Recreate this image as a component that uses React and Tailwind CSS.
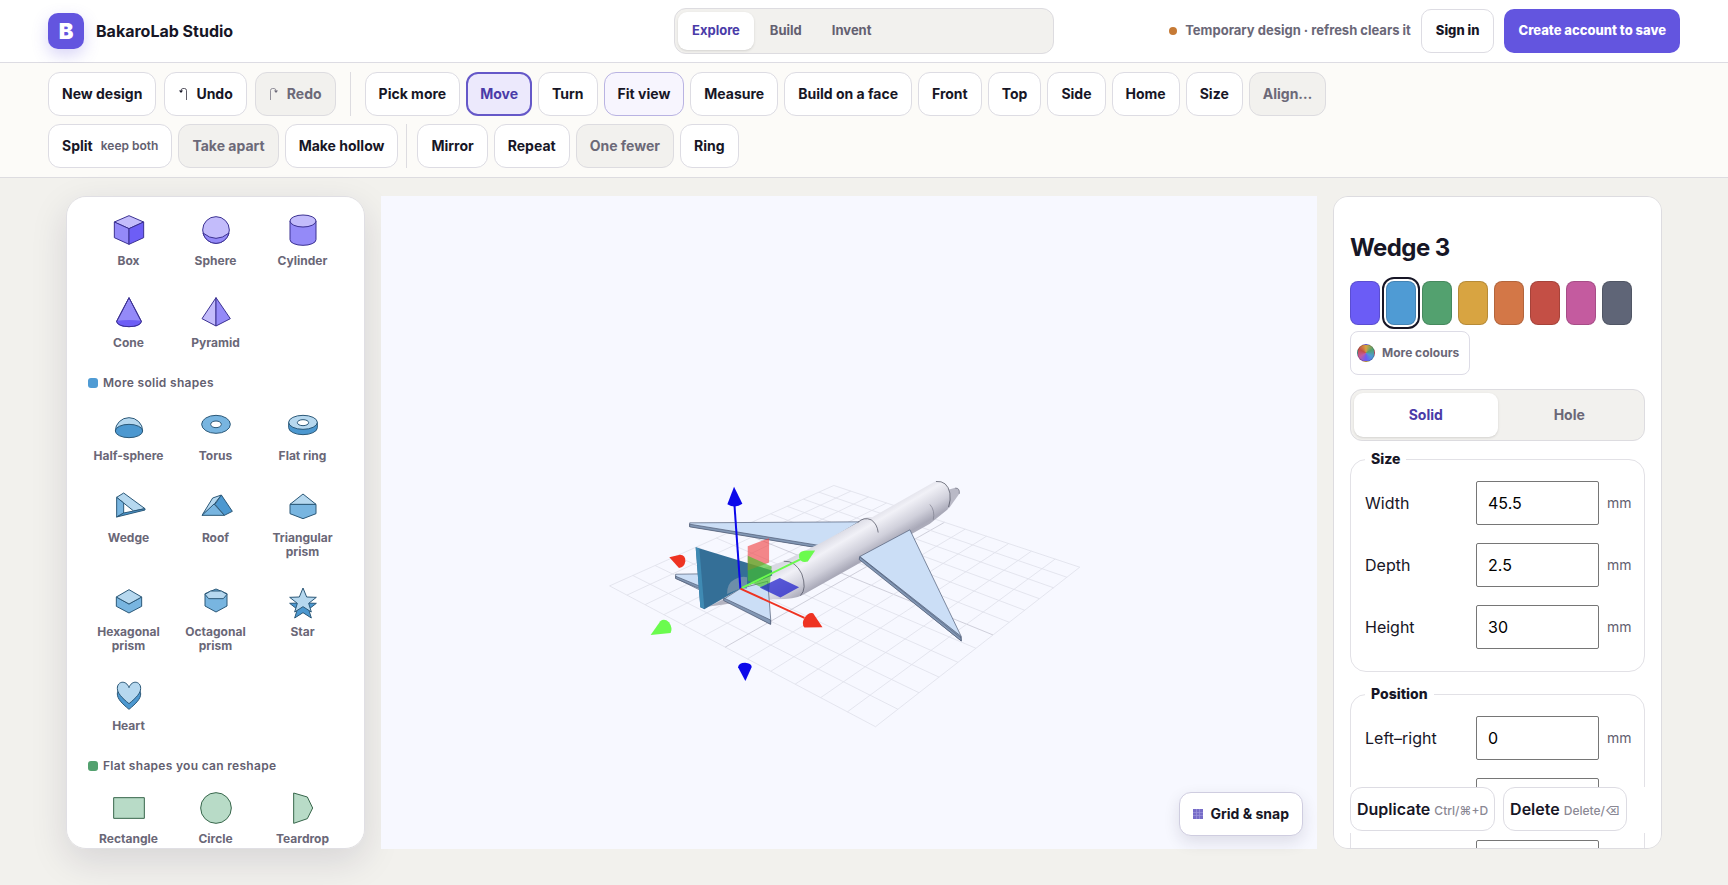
import { useState } from 'react'
import clsx from 'clsx'

const PURPLE = { light: '#c3bcfb', mid: '#948af8', dark: '#6d5ef6', line: '#3b3192' }
const BLUE = { light: '#b6d8ef', mid: '#78b5e0', dark: '#4c98d0', line: '#2b5878' }
const GREEN = { light: '#b8dbc7', line: '#37664b' }

const STAR = '0,-39 11,-12 40,-11 17,7 25,33 0,17 -25,33 -17,7 -40,-11 -11,-12'
const HEART = 'M0,26 C-22,8 -35,-6 -35,-20 C-35,-42 -8,-46 0,-22 C8,-46 35,-42 35,-20 C35,-6 22,8 0,26Z'

const SHAPES = {
  basic: [
    ['Box', PURPLE, (c) => (
      <>
        <polygon points="0,-43 44,-24 0,-4 -44,-24" fill={c.light} />
        <polygon points="-44,-24 0,-4 0,43 -44,23" fill={c.mid} />
        <polygon points="44,-24 0,-4 0,43 44,23" fill={c.dark} />
      </>
    )],
    ['Sphere', PURPLE, (c) => (
      <>
        <circle r="40" fill={c.light} />
        <path d="M-39,9 Q0,41 39,9 A40 40 0 0 1 -39,9Z" fill={c.mid} />
      </>
    )],
    ['Cylinder', PURPLE, (c) => (
      <>
        <path d="M-39,-27 V29 A39 17 0 0 0 39,29 V-27Z" fill={c.mid} />
        <ellipse cy="-27" rx="39" ry="18" fill={c.light} />
      </>
    )],
    ['Cone', PURPLE, (c) => (
      <>
        <path d="M0,-43 L-37,28 A37 16 0 0 0 37,28Z" fill={c.mid} />
        <path d="M-36,26 Q0,22 36,26 Q38,45 0,45 Q-38,45 -36,26Z" fill={c.dark} stroke="none" />
        <path d="M0,-43 L-37,28 A37 16 0 0 0 37,28Z" fill="none" />
      </>
    )],
    ['Pyramid', PURPLE, (c) => (
      <>
        <polygon points="0,-43 -42,20 0,42" fill={c.light} />
        <polygon points="0,-43 43,20 0,42" fill={c.mid} />
      </>
    )],
  ],
  solid: [
    ['Half-sphere', BLUE, (c) => (
      <>
        <path d="M-41,18 A41 40 0 0 1 41,18Z" fill={c.light} />
        <ellipse cy="18" rx="41" ry="20" fill={c.dark} />
      </>
    )],
    ['Torus', BLUE, (c) => (
      <>
        <ellipse cy="-2" rx="43" ry="27" fill={c.mid} />
        <ellipse cy="-2" rx="16" ry="10" fill="#fff" />
      </>
    )],
    ['Flat ring', BLUE, (c) => (
      <>
        <path d="M-43,-8 V8 A43 21 0 0 0 43,8 V-8Z" fill={c.dark} />
        <ellipse cy="-8" rx="43" ry="21" fill={c.light} />
        <ellipse cy="-7" rx="17" ry="9" fill="#fff" />
      </>
    )],
    ['Wedge', BLUE, (c) => (
      <>
        <polygon points="-37,-29 -16,-42 48,5 14,12 -16,-12" fill={c.light} />
        <polygon points="-37,-29 -16,-12 -16,18 -37,30" fill={c.mid} />
        <polygon points="-37,30 -16,18 14,12 48,5 48,9" fill={c.dark} />
      </>
    )],
    ['Roof', BLUE, (c) => (
      <>
        <polygon points="-42,25 -10,-27 16,-36 -8,-5" fill={c.light} />
        <polygon points="16,-36 49,13 25,25 -3,-8" fill={c.dark} />
        <polygon points="-42,25 -6,-9 25,25" fill={c.mid} />
      </>
    )],
    ['Triangular prism', BLUE, (c) => (
      <>
        <polygon points="-39,-8 39,-8 39,20 0,35 -39,20" fill={c.mid} />
        <polygon points="0,-39 39,-8 -39,-8" fill={c.light} />
      </>
    )],
    ['Hexagonal prism', BLUE, (c) => (
      <>
        <polygon points="-38,-12 0,9 38,-12 38,16 0,36 -38,16" fill={c.mid} />
        <polygon points="0,-34 38,-12 0,9 -38,-12" fill={c.light} />
      </>
    )],
    ['Octagonal prism', BLUE, (c) => (
      <>
        <polygon points="-33,-22 0,-36 33,-22 33,15 0,33 -33,15" fill={c.mid} />
        <polygon points="-33,-20 -16,-30 16,-30 33,-20 22,-7 -22,-7" fill={c.light} />
      </>
    )],
    ['Star', BLUE, (c) => (
      <>
        <polygon points={STAR} transform="translate(0 18)" fill={c.dark} />
        <polygon points={STAR} fill={c.light} />
      </>
    )],
    ['Heart', BLUE, (c) => (
      <>
        <path d={HEART} transform="translate(0 17)" fill={c.dark} />
        <path d={HEART} fill={c.light} />
      </>
    )],
  ],
  flat: [
    ['Rectangle', GREEN, (c) => <rect x="-46" y="-31" width="92" height="62" fill={c.light} />],
    ['Circle', GREEN, (c) => <circle r="46" fill={c.light} />],
    ['Teardrop', GREEN, (c) => <polygon points="-28,-45 13,-33 29,0 13,32 -28,46" fill={c.light} />],
  ],
}

const SWATCHES = [
  ['Purple', 'bg-[#6b5cf6]'],
  ['Blue', 'bg-[#4f9bd4]'],
  ['Green', 'bg-[#53a16f]'],
  ['Yellow', 'bg-[#d8a441]'],
  ['Orange', 'bg-[#d37747]'],
  ['Red', 'bg-[#c44f45]'],
  ['Pink', 'bg-[#c45b9f]'],
  ['Slate', 'bg-[#5f6577]'],
]

function App() {
  const [level, setLevel] = useState('Explore')
  const [tool, setTool] = useState('Move')
  const [color, setColor] = useState('Blue')
  const [kind, setKind] = useState('Solid')

  return (
    <div className="flex h-screen flex-col bg-[#f2f1ed] font-['Inter',sans-serif] text-[#171626]">
      {/* Header */}
      <header className="grid shrink-0 grid-cols-[1fr_380px_1fr] items-center border-b border-[#dddce3] bg-white px-12 py-2">
        <div className="flex items-center gap-3">
          <div className="flex size-9 items-center justify-center rounded-[10px] bg-[#6355df] text-[22px] font-black text-white shadow-[0_6px_16px_rgba(99,85,223,0.25)]">B</div>
          <span className="text-base font-bold">BakaroLab Studio</span>
        </div>
        <nav className="flex gap-0.5 rounded-xl border border-[#dddce0] bg-[#f2f1ee] p-[3px]">
          {['Explore', 'Build', 'Invent'].map((name) => (
            <button
              key={name}
              onClick={() => setLevel(name)}
              className={clsx(
                'h-[38px] rounded-[9px] px-3.5 text-[13px] font-bold',
                level === name ? 'bg-white text-[#4a3ba8] shadow-sm' : 'text-[#636070]'
              )}
            >
              {name}
            </button>
          ))}
        </nav>
        <div className="flex items-center justify-end gap-2.5">
          <p className="flex items-center gap-2 text-[13px] font-bold text-[#6a6777]">
            <span className="size-2 rounded-full bg-[#c67a35]" />
            Temporary design · refresh clears it
          </p>
          <button className="h-11 rounded-[10px] border border-[#dddce3] bg-white px-3.5 text-[13px] font-extrabold">Sign in</button>
          <button className="h-11 rounded-[10px] bg-[#6355df] px-3.5 text-[13px] font-extrabold text-white">Create account to save</button>
        </div>
      </header>

      {/* Toolbar */}
      <div className="flex shrink-0 flex-col gap-2 border-b border-[#dddce0] bg-[#fcfbf8] px-12 pb-[9px] pt-[9px]">
        <div className="flex flex-wrap items-center gap-1.5">
          <div className="flex gap-2">
            <ToolButton>New design</ToolButton>
            <ToolButton><HookIcon /> Undo</ToolButton>
            <ToolButton disabled><HookIcon flip /> Redo</ToolButton>
          </div>
          <div className="mx-2 h-11 w-px bg-[#dddce0]" />
          {['Pick more', 'Move', 'Turn'].map((name) => (
            <ToolButton key={name} active={tool === name} onClick={() => setTool(name)}>{name}</ToolButton>
          ))}
          <ToolButton soft>Fit view</ToolButton>
          {['Measure', 'Build on a face', 'Front', 'Top', 'Side', 'Home', 'Size'].map((name) => (
            <ToolButton key={name} active={tool === name} onClick={() => setTool(name)}>{name}</ToolButton>
          ))}
          <ToolButton disabled>Align…</ToolButton>
        </div>
        <div className="flex flex-wrap items-center gap-1.5">
          <ToolButton>Split <span className="text-xs font-semibold text-[#636070]">keep both</span></ToolButton>
          <ToolButton disabled>Take apart</ToolButton>
          <ToolButton>Make hollow</ToolButton>
          <div className="ml-0.5 mr-1 h-11 w-px bg-[#dddce0]" />
          <ToolButton>Mirror</ToolButton>
          <ToolButton>Repeat</ToolButton>
          <ToolButton disabled>One fewer</ToolButton>
          <ToolButton>Ring</ToolButton>
        </div>
      </div>

      {/* Workspace */}
      <main className="grid min-h-0 flex-1 grid-cols-[299px_1fr_329px] gap-4 px-[66px] pb-9 pt-[18px]">
        <aside className="min-h-0 rounded-[20px] shadow-[0_12px_36px_rgba(30,25,60,0.13)]">
          <div className="h-full overflow-y-auto rounded-[20px] border border-[#e0dfe4] bg-white px-[21px] pt-1.5 [scrollbar-width:none]">
            <ShapeGrid items={SHAPES.basic} />
            <ShapeHeading dot="bg-[#4f9bd4]">More solid shapes</ShapeHeading>
            <ShapeGrid items={SHAPES.solid} />
            <ShapeHeading dot="bg-[#53a16f]">Flat shapes you can reshape</ShapeHeading>
            <ShapeGrid items={SHAPES.flat} />
          </div>
        </aside>

        <section className="relative min-h-0 bg-[#f7f8ff]">
          <Scene />
          <button className="absolute bottom-[13px] right-3.5 flex h-11 items-center gap-2 rounded-xl border border-[#cfcde0] bg-white px-[13px] text-sm font-bold shadow-[0_6px_16px_rgba(30,25,60,0.12)]">
            <svg viewBox="0 0 10 10" className="size-2.5">
              <rect width="10" height="10" fill="#766cc8" />
              <path d="M0 3.5H10M0 6.5H10M3.5 0V10M6.5 0V10" stroke="#9f97dd" strokeWidth="0.7" />
            </svg>
            Grid &amp; snap
          </button>
        </section>

        <aside className="relative min-h-0 overflow-y-auto rounded-[15px] border border-[#dddce0] bg-white px-4 pt-[35px] [scrollbar-width:none]">
          <h2 className="mb-[17px] text-2xl font-bold leading-8 tracking-tight">Wedge 3</h2>
          <div className="flex flex-wrap gap-1.5">
            {SWATCHES.map(([name, bg]) => (
              <button
                key={name}
                aria-label={name}
                onClick={() => setColor(name)}
                className={clsx(
                  'h-11 w-[30px] rounded-lg border border-black/15',
                  bg,
                  color === name && 'outline-2 outline-offset-2 outline-[#171626]'
                )}
              />
            ))}
            <button className="flex h-11 items-center gap-[7px] rounded-lg border border-[#dddce6] px-1.5 pr-2.5 text-xs font-bold text-[#6a6777]">
              <span className="size-[18px] rounded-full border border-black/20 bg-[conic-gradient(#d8a441,#53a16f,#4f9bd4,#6b5cf6,#c45b9f,#c44f45,#d8a441)]" />
              More colours
            </button>
          </div>

          <div className="mt-3.5 grid grid-cols-2 rounded-xl border border-[#dddce0] bg-[#f2f1ee] p-[3px]">
            {['Solid', 'Hole'].map((name) => (
              <button
                key={name}
                onClick={() => setKind(name)}
                className={clsx(
                  'h-11 rounded-[9px] text-sm font-bold',
                  kind === name ? 'bg-white text-[#4a3ba8] shadow-sm' : 'text-[#6a6777]'
                )}
              >
                {name}
              </button>
            ))}
          </div>

          <FieldGroup title="Size" className="mt-2">
            <NumberField label="Width" value="45.5" />
            <NumberField label="Depth" value="2.5" />
            <NumberField label="Height" value="30" />
          </FieldGroup>
          <FieldGroup title="Position" className="mt-3">
            <NumberField label="Left–right" value="0" />
            <BlankField label="Front–back" />
            <BlankField label="Up–down" />
          </FieldGroup>

          <div className="sticky bottom-[15px] flex gap-2 bg-white pb-0.5">
            <ActionButton hint="Ctrl/⌘+D">Duplicate</ActionButton>
            <ActionButton hint="Delete/⌫">Delete</ActionButton>
          </div>
        </aside>
      </main>
    </div>
  )
}

function ToolButton({ children, active, soft, disabled, onClick }) {
  return (
    <button
      onClick={onClick}
      disabled={disabled}
      className={clsx(
        'flex h-11 items-center gap-2 rounded-xl text-sm font-bold',
        active ? 'border-2 border-[#6558c8] bg-[#ece9fc] px-3 text-[#4a3ba8]' : 'border px-[13px]',
        soft && 'border-[#b9b3e2] bg-[#f7f5fe]',
        disabled && 'border-[#dddce0] bg-[#f2f1ee] text-[#6c6978]',
        !active && !soft && !disabled && 'border-[#dddce3] bg-white'
      )}
    >
      {children}
    </button>
  )
}

function HookIcon({ flip }) {
  return (
    <svg viewBox="0 0 10 14" className={clsx('h-3.5 w-2.5', flip && '-scale-x-100')} fill="none" stroke="currentColor">
      <path d="M8.5 13V3.5Q8.5 1.5 6.5 1.5H5Q3 1.5 3 4" strokeWidth="0.7" />
      <path d="M1 3.5H5L3 6Z" fill="currentColor" stroke="none" />
    </svg>
  )
}

function ShapeHeading({ dot, children }) {
  return (
    <h3 className="mb-1.5 mt-[13px] flex items-center gap-[5px] text-xs font-semibold leading-[18px] tracking-wide text-[#636070]">
      <span className={clsx('size-2.5 rounded-[3px]', dot)} />
      {children}
    </h3>
  )
}

function ShapeGrid({ items }) {
  return (
    <div className="grid grid-cols-3 gap-1.5">
      {items.map(([name, color, draw]) => (
        <button key={name} className="flex min-h-[76px] flex-col items-center gap-1.5 py-[9px]">
          <svg viewBox="-54 -54 108 108" className="size-9 overflow-visible" stroke={color.line} strokeWidth="3" strokeLinejoin="round">
            {draw(color)}
          </svg>
          <span className="text-xs font-bold leading-3.5 text-[#6a6777]">{name}</span>
        </button>
      ))}
    </div>
  )
}

function FieldGroup({ title, className, children }) {
  return (
    <fieldset className={clsx('flex flex-col gap-[18px] rounded-2xl border border-[#e2e1e6] px-3.5 pb-[22px] pt-3', className)}>
      <legend className="px-1.5 text-sm font-extrabold leading-5">{title}</legend>
      {children}
    </fieldset>
  )
}

function NumberField({ label, value }) {
  return (
    <label className="flex items-center gap-2 text-base">
      <span className="flex-1">{label}</span>
      <input defaultValue={value} className="h-11 w-[123px] rounded-[2px] border border-[#767676] bg-white px-[11px] text-base text-black" />
      <span className="w-[23px] text-sm text-[#636070]">mm</span>
    </label>
  )
}

function BlankField({ label }) {
  return (
    <div className="flex justify-end pr-[31px]">
      <input aria-label={label} className="h-11 w-[123px] rounded-[2px] border border-[#767676] bg-white px-[11px] text-base text-black" />
    </div>
  )
}

function ActionButton({ hint, children }) {
  return (
    <button className="h-11 whitespace-nowrap rounded-xl border border-[#dddce3] bg-white px-1.5 text-base font-semibold">
      {children} <small className="text-xs font-medium text-[#8a8894]">{hint}</small>
    </button>
  )
}

// Maps the unit square onto the four plate corners, in perspective
function makeProjection([[x0, y0], [x1, y1], [x2, y2], [x3, y3]]) {
  const dx1 = x1 - x2, dx2 = x3 - x2, dx3 = x0 - x1 + x2 - x3
  const dy1 = y1 - y2, dy2 = y3 - y2, dy3 = y0 - y1 + y2 - y3
  const det = dx1 * dy2 - dx2 * dy1
  const g = (dx3 * dy2 - dx2 * dy3) / det
  const h = (dx1 * dy3 - dx3 * dy1) / det
  return (u, v) => {
    const w = g * u + h * v + 1
    return [
      ((x1 - x0 + g * x1) * u + (x3 - x0 + h * x3) * v + x0) / w,
      ((y1 - y0 + g * y1) * u + (y3 - y0 + h * y3) * v + y0) / w,
    ]
  }
}

const project = makeProjection([[88, 376], [885, 798], [1497, 320], [760, 75]])
const CELLS = 12
const gridLine = (a, b) => `M${project(...a).join()}L${project(...b).join()}`

function Scene() {
  const steps = Array.from({ length: CELLS + 1 }, (_, i) => i / CELLS)

  return (
    <svg viewBox="-597 -792 2805 1956" className="absolute inset-0 h-full w-full" strokeLinejoin="round">
      <defs>
        <linearGradient id="hull" gradientUnits="userSpaceOnUse" x1="830" y1="180" x2="895" y2="290">
          <stop offset="0" stopColor="#d9d9e3" />
          <stop offset="0.25" stopColor="#f1f1f7" />
          <stop offset="0.6" stopColor="#d0d0db" />
          <stop offset="0.85" stopColor="#a9a9b8" />
          <stop offset="1" stopColor="#b0b0be" />
        </linearGradient>
      </defs>

      {/* Build plate */}
      <g fill="none" strokeWidth="2.5">
        {steps.map((t) => (
          <path key={t} d={gridLine([t, 0], [t, 1]) + gridLine([0, t], [1, t])} stroke={t === 0.5 ? '#c6c6d2' : '#e0e1eb'} />
        ))}
      </g>

      {/* Far wing */}
      <g stroke="#4a5670" strokeWidth="2">
        <polygon points="328,187 835,184 720,254 700,259 328,198" fill="#cbdef6" />
        <polygon points="328,191 712,254 700,260 328,199" fill="#8297b4" />
      </g>

      {/* Far tailplane */}
      <polygon points="286,341 356,340 440,400 356,387 286,353" fill="#cbdef6" stroke="#4a5670" strokeWidth="2" />
      <path d="M286,347 L400,394 V402 L286,354Z" fill="#8297b4" stroke="#4a5670" strokeWidth="2" />

      {/* Nose tip */}
      <path d="M1095,90 L1124,82 Q1138,82 1136,100 L1104,145Z" fill="#b9b9c6" />
      <path d="M1124,83 Q1138,82 1136,100" fill="none" stroke="#777888" strokeWidth="2.5" />

      {/* Fuselage */}
      <path d="M385,438 Q430,400 455,355 L610,302 L725,245 L832,186 Q850,168 875,170 L1062,64 Q1100,56 1110,100 Q1112,130 1100,148 L1048,190 L665,404 Q640,418 570,416 L440,430Z" fill="url(#hull)" />
      <path d="M385,438 Q430,415 470,400 L560,416 L440,430Z" fill="#b3b3c0" />
      <g fill="none" stroke="#3f4252" strokeWidth="2">
        <path d="M610,302 Q645,300 664,340 Q680,385 660,405" />
        <path d="M832,186 Q850,168 872,178 Q890,190 893,216" />
        <path d="M1066,63 Q1100,60 1108,98 Q1111,118 1104,140" />
        <path d="M1048,132 Q1064,150 1058,178" stroke="#7b7d8c" />
      </g>

      {/* Near wing */}
      <g stroke="#4a5670" strokeWidth="2">
        <polygon points="838,288 988,208 1142,528 1142,541 838,296" fill="#cbdef6" />
        <polygon points="838,288 1140,526 1142,541 836,297" fill="#8297b4" />
        <path d="M840,291 L1141,532" fill="none" strokeWidth="1.5" />
      </g>

      {/* Near tailplane */}
      <g stroke="#4a5670" strokeWidth="2">
        <polygon points="480,384 562,362 571,478 571,491 430,416" fill="#cbdef6" />
        <polygon points="430,412 570,478 570,491 430,420" fill="#8297b4" />
      </g>

      {/* Selected fin */}
      <polygon points="346,260 575,330 575,345 480,384 372,446 360,440" fill="#346f97" />
      <path d="M440,400 Q440,368 462,357 Q480,346 500,350 L500,384 L480,384Z" fill="#6d8ea9" />
      <polygon points="346,260 357,264 372,444 360,440" fill="#3f8ab3" />

      {/* Plane handles */}
      <polygon points="502,257 566,233 566,306 502,330" fill="#f04040" fillOpacity="0.62" />
      <polygon points="502,286 574,318 566,392 502,360" fill="#42c226" fillOpacity="0.65" />
      <polygon points="538,381 598,352 656,380 600,411" fill="#2626cc" fillOpacity="0.76" />

      {/* Axis arrows */}
      <g strokeWidth="6">
        <path d="M480,384 L664,294" stroke="#6bfb4e" />
        <path d="M480,384 L462,130" stroke="#0c08ea" />
        <path d="M480,384 L672,472" stroke="#ee3322" />
      </g>
      <path d="M461,79 L486,130 Q464,145 441,131Z" fill="#0c08ea" />
      <path d="M704,270 L682,303 Q660,308 656,290 Q653,274 672,271Z" fill="#6bfb4e" />
      <path d="M726,500 L672,501 Q662,490 672,472 Q684,454 698,458Z" fill="#ee3322" />
      <path d="M267,290 L299,283 Q316,284 315,302 Q313,320 296,322Z" fill="#ee3322" />
      <path d="M211,523 L240,482 Q252,472 266,485 Q278,502 271,517Z" fill="#6bfb4e" />
      <path d="M495,661 L473,620 Q474,606 494,606 Q513,607 514,619Z" fill="#0c08ea" />
    </svg>
  )
}

export default App
